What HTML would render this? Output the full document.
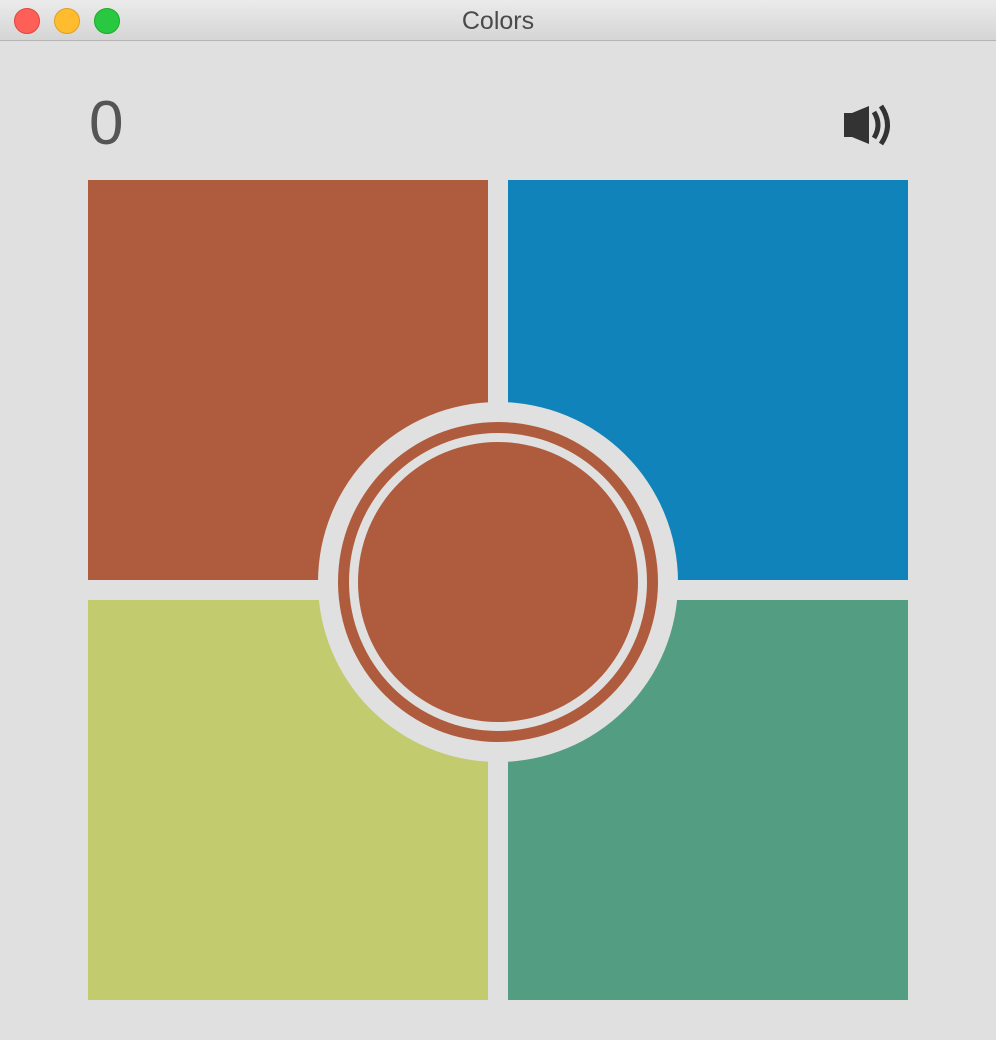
<!DOCTYPE html>
<html><head><style>
body{margin:0;width:996px;height:1040px;background:#e0e0e0;position:relative;overflow:hidden;font-family:"Liberation Sans",sans-serif}
.tb{position:absolute;left:0;top:0;width:996px;height:40px;background:linear-gradient(#ebebeb,#d5d5d5);border-bottom:1px solid #b4b4b4}
.tb .t{position:absolute;left:0;right:0;top:7px;text-align:center;font-size:25px;color:#4a4a4a}
.d{position:absolute;top:8px;width:24px;height:24px;border-radius:50%}
.sq{position:absolute;width:400px;height:400px}
.c{position:absolute;border-radius:50%}
</style></head><body>
<div class="tb"><div class="t">Colors</div>
<div class="d" style="left:14px;background:#fe5f57;border:0.5px solid #e14640"></div>
<div class="d" style="left:54px;background:#febc2e;border:0.5px solid #dfa023"></div>
<div class="d" style="left:94px;background:#28c840;border:0.5px solid #1aab29"></div></div>
<div style="position:absolute;left:89px;top:88px;font-size:62px;color:#555">0</div>
<svg style="position:absolute;left:840px;top:100px" width="60" height="50" viewBox="840 100 60 50">
<path d="M844 113h8l17-7v38l-17-7h-8z" fill="#333"/>
<path d="M874 112q8 13 0 26" stroke="#333" stroke-width="5" fill="none"/>
<path d="M881 106q13 19 0 38" stroke="#333" stroke-width="5" fill="none"/>
</svg>
<div class="sq" style="left:88px;top:180px;background:#af5b3d"></div>
<div class="sq" style="left:508px;top:180px;background:#1084ba"></div>
<div class="sq" style="left:88px;top:600px;background:#c2cb6d"></div>
<div class="sq" style="left:508px;top:600px;background:#539e82"></div>
<div class="c" style="left:318px;top:402px;width:360px;height:360px;background:#e0e0e0"></div>
<div class="c" style="left:338px;top:422px;width:320px;height:320px;background:#af5b3d"></div>
<div class="c" style="left:349px;top:433px;width:298px;height:298px;background:#e0e0e0"></div>
<div class="c" style="left:358px;top:442px;width:280px;height:280px;background:#af5b3d"></div>
</body></html>
